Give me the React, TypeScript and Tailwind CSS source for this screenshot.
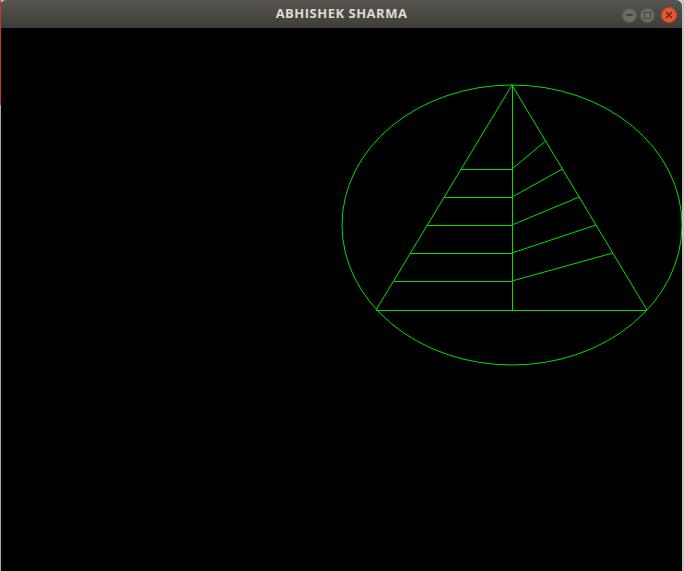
import React from "react";

export default function App() {
  const g = "#00e000";
  const leftYs = [169, 197, 225, 253, 281];
  const apex = { x: 512, y: 85 };
  const baseY = 310;
  const baseL = 376;
  const baseR = 647;
  const lx = (y: number) => apex.x - (apex.x - baseL) * ((y - apex.y) / (baseY - apex.y));
  const rx = (y: number) => apex.x + (baseR - apex.x) * ((y - apex.y) / (baseY - apex.y));
  const off = 28;
  return (
    <div className="relative w-[684px] h-[571px] bg-[#cfcfcf] overflow-hidden flex">
      <div className="w-[682px] h-full flex flex-col">
        <div
          className="h-[28px] rounded-t-[6px] flex items-center relative shrink-0"
          style={{ background: "linear-gradient(#57554f, #3e3d39)" }}
        >
          <div
            className="flex-1 text-center text-[13px] font-bold text-[#dfdbd2] tracking-[0.5px] pl-[1px]"
            style={{ fontFamily: '"Open Sans", "Noto Sans", sans-serif' }}
          >
            ABHISHEK SHARMA
          </div>
          <div className="absolute right-[5px] top-[7px] flex items-center gap-[3px]">
            <div className="w-[15px] h-[15px] rounded-full bg-[#6e6c66] border border-[#5a5853] flex items-center justify-center">
              <div className="w-[7px] h-[2px] bg-[#45443f]" />
            </div>
            <div className="w-[15px] h-[15px] rounded-full bg-[#6e6c66] border border-[#5a5853] flex items-center justify-center">
              <div className="w-[7px] h-[7px] border border-[#45443f]" />
            </div>
            <div className="ml-[3px] w-[16px] h-[16px] rounded-full bg-[#e8562f] border border-[#c9441f] flex items-center justify-center">
              <svg width="8" height="8" viewBox="0 0 8 8">
                <path d="M1 1 L7 7 M7 1 L1 7" stroke="#5a2514" strokeWidth="1.4" />
              </svg>
            </div>
          </div>
        </div>
        <div className="flex-1 bg-black">
          <svg width="682" height="543" viewBox={`0 ${off} 682 543`}>
            <g stroke={g} strokeWidth="1" fill="none" shapeRendering="crispEdges">
              <ellipse cx="512" cy="225" rx="170" ry="140" shapeRendering="geometricPrecision" />
              <line x1={apex.x} y1={apex.y} x2={baseL} y2={baseY} shapeRendering="geometricPrecision" />
              <line x1={apex.x} y1={apex.y} x2={baseR} y2={baseY} shapeRendering="geometricPrecision" />
              <line x1={baseL} y1={baseY + 0.5} x2={baseR} y2={baseY + 0.5} />
              <line x1={apex.x + 0.5} y1={apex.y} x2={apex.x + 0.5} y2={baseY} />
              {leftYs.map((y) => (
                <line key={"l" + y} x1={lx(y)} y1={y + 0.5} x2={512} y2={y + 0.5} />
              ))}
              {leftYs.map((y) => (
                <line
                  key={"r" + y}
                  x1={512}
                  y1={y}
                  x2={rx(y - 28)}
                  y2={y - 28}
                  shapeRendering="geometricPrecision"
                />
              ))}
            </g>
          </svg>
        </div>
      </div>
      <div className="w-[2px] h-full bg-[#c6c6c6]" />
      <div className="absolute left-0 top-0 w-px h-[105px] bg-[#c0392b]" />
      <div className="absolute left-0 top-[105px] w-px bottom-0 bg-[#a8a8a8]" />
    </div>
  );
}
